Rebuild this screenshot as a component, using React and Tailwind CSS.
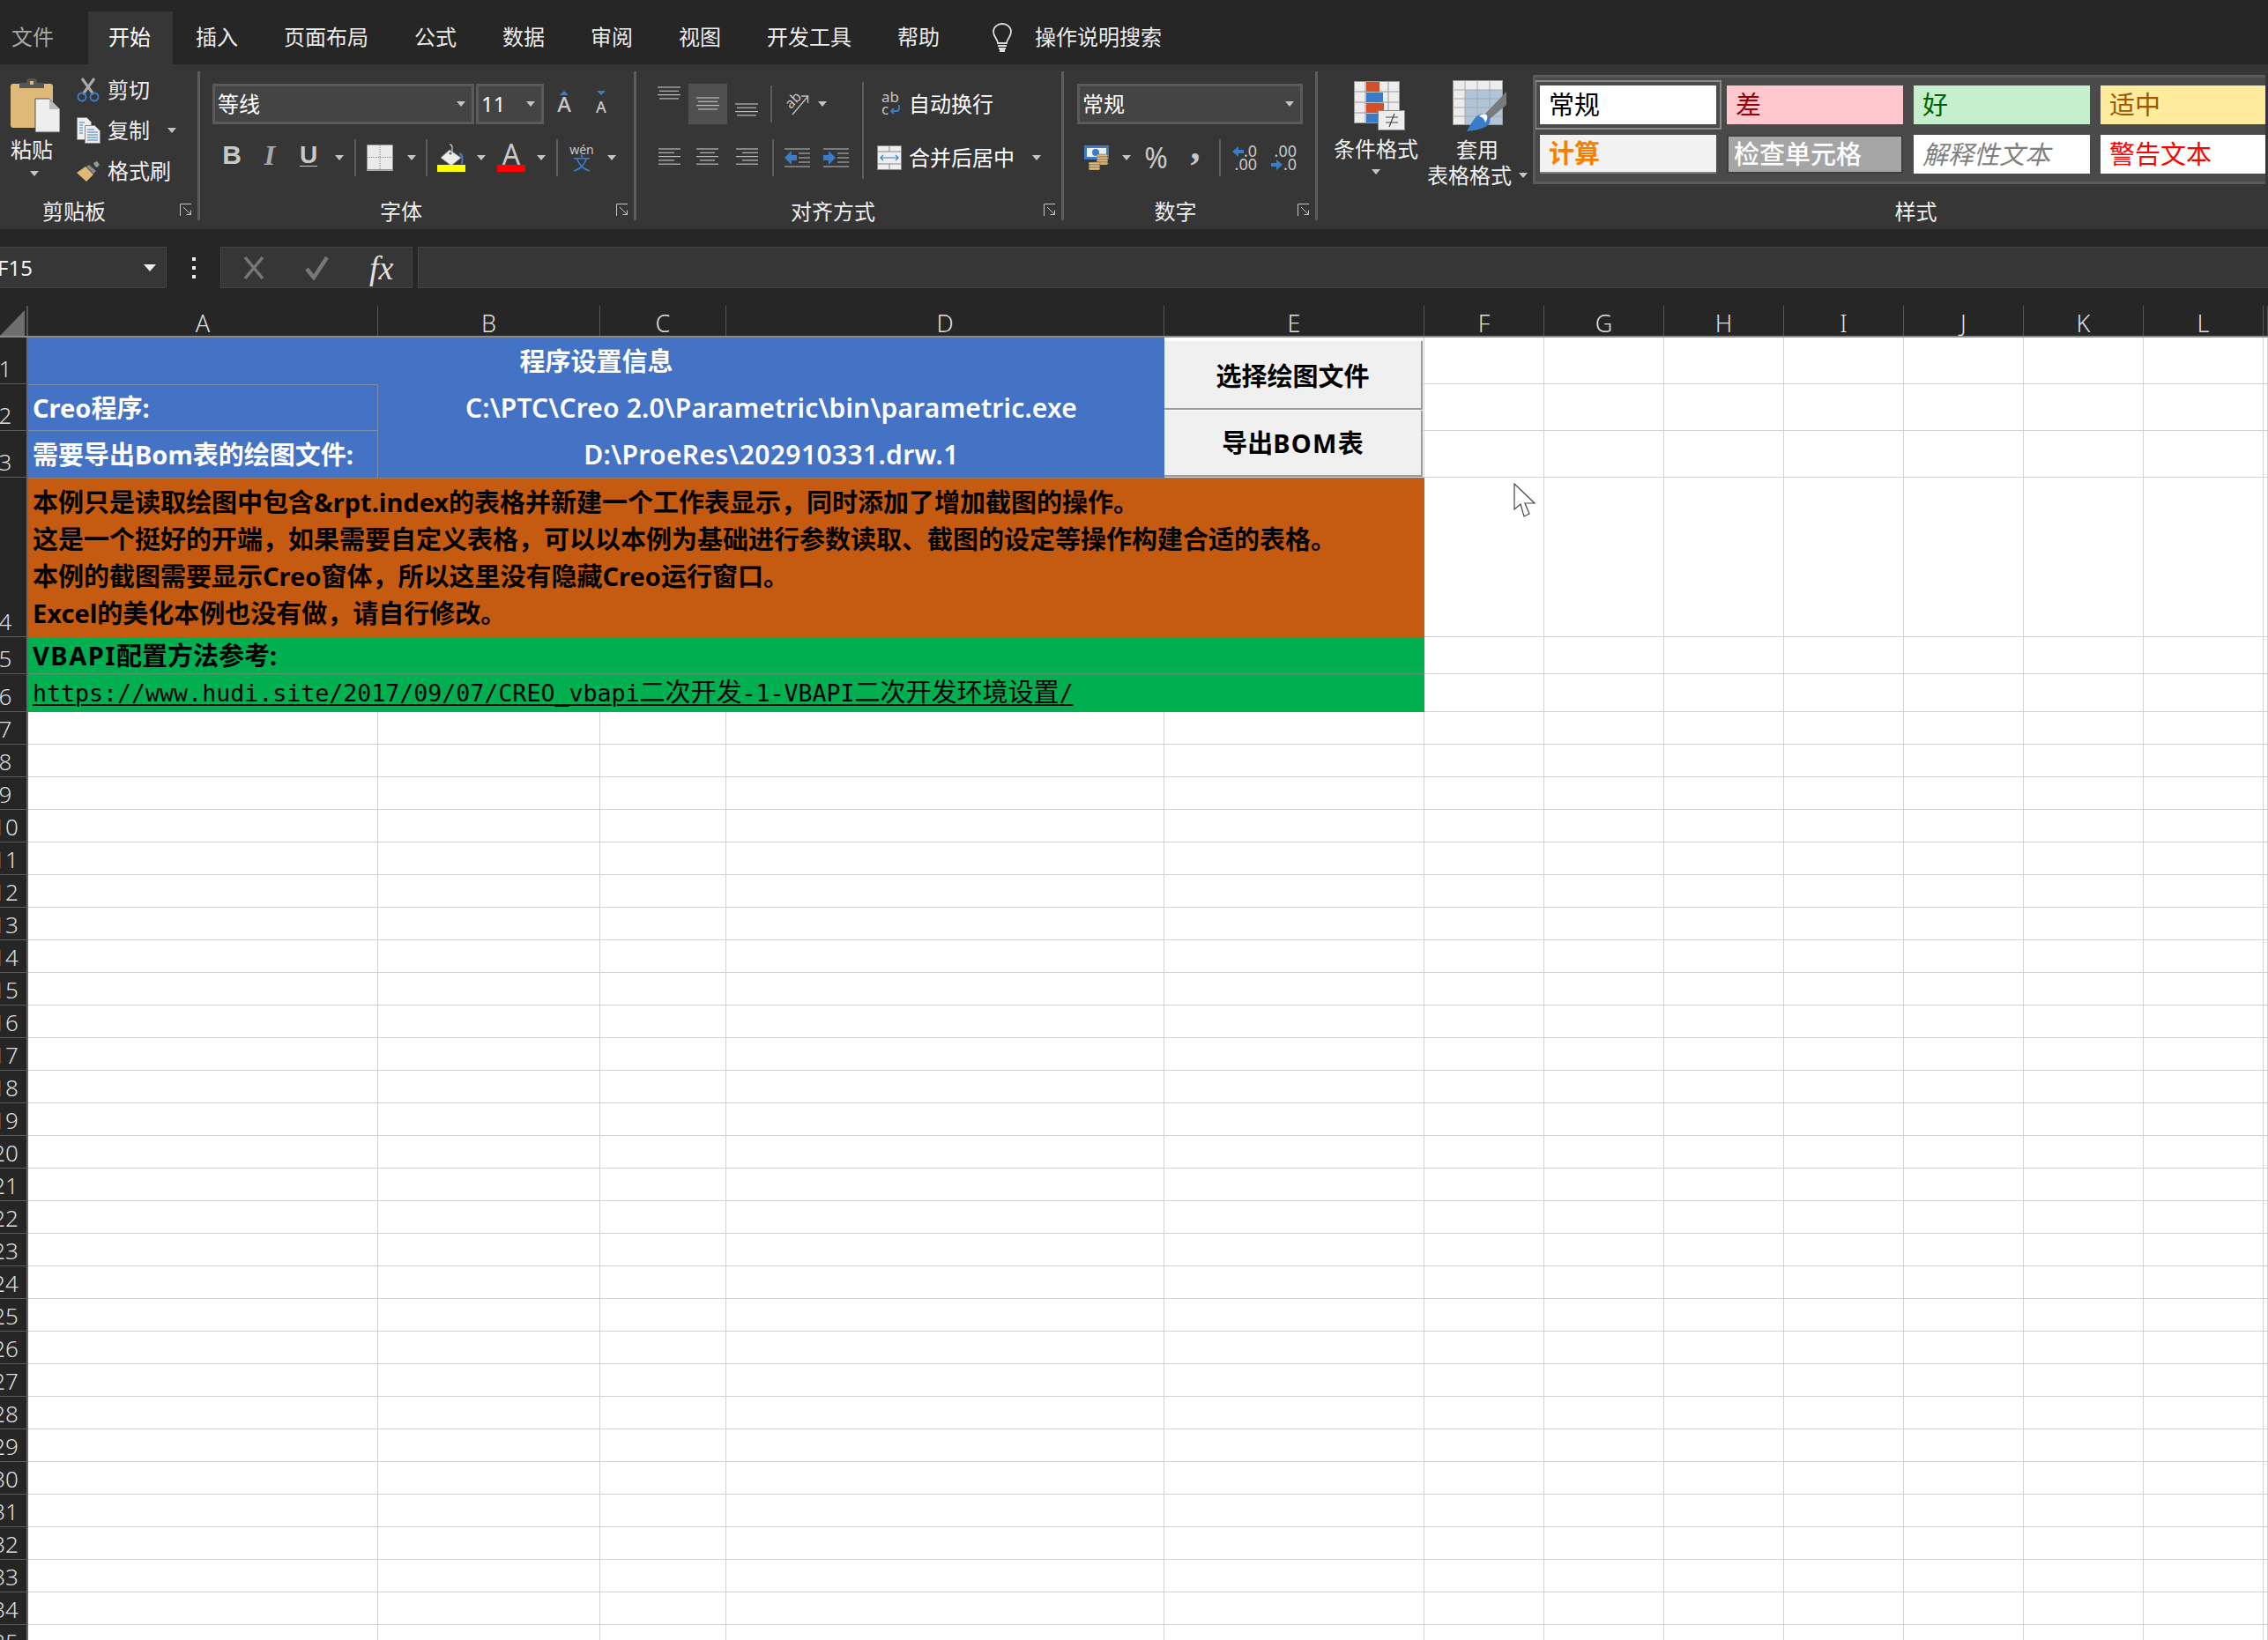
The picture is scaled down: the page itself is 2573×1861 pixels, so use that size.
import React from "react";

const Caret = ({ className = "" }) => (
  <div className={"w-0 h-0 shrink-0 border-x-[5px] border-x-transparent border-t-[6px] border-t-[#c4c4c4] " + className} />
);
const Sep = ({ className = "" }) => <div className={"w-[2px] h-[42px] shrink-0 bg-[#5c5c5c] " + className} />;

const Expander = () => (
  <svg width="14" height="14" viewBox="0 0 14 14" className="absolute right-[6px] top-[3px]" fill="none" stroke="#c4c4c4" strokeWidth="1">
    <path d="M0.5 14V0.5H13" />
    <path d="M4 4L12.5 12.5M12.5 7.5V12.5H7.5" />
  </svg>
);

const Lines = ({ rows, w = 26, gap = 4.3, h }) => (
  <svg width={w} height={h} viewBox={`0 0 ${w} ${h}`} className="shrink-0" stroke="#bdbdbd" strokeWidth="1.2">
    {rows.map((r, i) => (
      <line key={i} x1={r[0]} x2={r[1]} y1={1 + i * gap} y2={1 + i * gap} />
    ))}
  </svg>
);

const Paste = () => (
  <svg width="56" height="62" viewBox="0 0 56 62" className="shrink-0">
    <rect x="0" y="6" width="48" height="50" rx="3" fill="#dfb978" />
    <path d="M10 11V7a2 2 0 0 1 2-2h6V3a3 3 0 0 1 3-3h6a3 3 0 0 1 3 3v2h6a2 2 0 0 1 2 2v4z" fill="#555" />
    <rect x="22" y="3" width="4" height="4" fill="#dfb978" />
    <path d="M28 23h16l12 12v26H28z" fill="#eee" stroke="#555" strokeWidth="1" />
    <path d="M44 23v12h12z" fill="#bbb" />
  </svg>
);
const Scissors = () => (
  <svg width="26" height="28" viewBox="0 0 26 28" fill="none" className="shrink-0">
    <path d="M7 19L20 1M19 19L6 1" stroke="#aaa" strokeWidth="3" />
    <circle cx="6" cy="22" r="4.5" stroke="#3a7cc8" strokeWidth="2" />
    <circle cx="20" cy="22" r="4.5" stroke="#3a7cc8" strokeWidth="2" />
  </svg>
);
const Copy = () => (
  <svg width="27" height="30" viewBox="0 0 27 30" className="shrink-0">
    <path d="M0.5 0.5h11l5 5v20h-16z" fill="#eee" stroke="#888" />
    <path d="M9.5 9.5h11l6 6v14h-17z" fill="#eee" stroke="#888" />
    <path d="M3 6h6M3 9h4M3 12h4M3 15h4M3 18h4M12 14h8M12 17h12M12 20h12M12 23h12M12 26h12" stroke="#3a7cc8" strokeWidth="1.1" />
  </svg>
);
const Brush = () => (
  <svg width="26" height="24" viewBox="0 0 26 24" className="shrink-0">
    <path d="M19 3l4-2 3 4-3 3-2-1z" fill="#999" />
    <path d="M14 5l8 7-3 3-8-8z" fill="#8a8a8a" />
    <path d="M10 7l9 9-8 8L0 14z" fill="#dfb978" />
  </svg>
);
const Borders = () => (
  <svg width="30" height="30" viewBox="0 0 30 30" className="shrink-0">
    <rect x="0.5" y="0.5" width="29" height="28" fill="#ebebeb" stroke="#999" strokeDasharray="1 1" />
    <path d="M15 1V28M1 14.5H29" stroke="#888" strokeDasharray="1 1" />
    <path d="M0 29.5H30" stroke="#aaa" strokeWidth="1.2" />
  </svg>
);
const Fill = () => (
  <svg width="32" height="32" viewBox="0 0 32 32" className="shrink-0">
    <path d="M14 1a3 3 0 0 1 3 3v6" stroke="#bbb" strokeWidth="1.4" fill="none" />
    <path d="M14 7L27 16 16 25 4 16z" fill="#eee" stroke="#888" />
    <circle cx="15" cy="11" r="1.6" fill="#666" />
    <path d="M26 10c4 2 4 6 3 13h-2c1-5 1-8-2-11z" fill="#3a7cc8" />
    <rect x="0" y="24" width="32" height="8" fill="#ffff00" />
  </svg>
);
const Orient = () => (
  <svg width="28" height="28" viewBox="0 0 28 28" className="shrink-0" fill="none" stroke="#bdbdbd">
    <path d="M9 27L26 7M19 6h7.5v8" strokeWidth="1.4" />
    <text x="1" y="17" fontSize="16" fill="#c8c8c8" stroke="none" transform="rotate(-45 9 12)" fontFamily="Noto Sans">ab</text>
  </svg>
);
const Wrap = () => (
  <svg width="22" height="28" viewBox="0 0 22 28" className="shrink-0">
    <text x="0" y="12" fontSize="17" fill="#c4c4c4" fontFamily="Noto Sans">ab</text>
    <text x="0" y="26" fontSize="17" fill="#c4c4c4" fontFamily="Noto Sans">c</text>
    <path d="M20 15v4a3 3 0 0 1-3 3h-5M14 19l-3 3 3 3" fill="none" stroke="#3a7cc8" strokeWidth="1.8" />
  </svg>
);
const Merge = () => (
  <svg width="28" height="28" viewBox="0 0 28 28" className="shrink-0">
    <rect x="0.5" y="0.5" width="27" height="27" fill="#eee" stroke="#888" />
    <path d="M0 7H28M0 21H28M14 0V7M14 21V28" stroke="#888" />
    <path d="M4 14H24M7 11l-3 3 3 3M21 11l3 3-3 3" fill="none" stroke="#3a7cc8" strokeWidth="1.2" />
  </svg>
);
const Indent = ({ right }) => (
  <svg width="29" height="22" viewBox="0 0 29 22" className="shrink-0" stroke="#bdbdbd" strokeWidth="1.1">
    <path d="M0 1H29M16 6H29M16 11H29M16 16H29M0 21H29" />
    {right ? (
      <path d="M0 8h6V3l8 8-8 8v-5H0z" fill="#3a7cc8" stroke="none" />
    ) : (
      <path d="M14 8H8V3L0 11l8 8v-5h6z" fill="#3a7cc8" stroke="none" />
    )}
  </svg>
);
const Arrow = ({ right }) => (
  <svg width="14" height="14" viewBox="0 0 14 14" className="shrink-0">
    {right ? <path d="M0 5h6V1l7 6-7 6V9H0z" fill="#3a7cc8" /> : <path d="M14 5H8V1L1 7l7 6V9h6z" fill="#3a7cc8" />}
  </svg>
);
const Money = () => (
  <svg width="28" height="28" viewBox="0 0 28 28" className="shrink-0">
    <rect x="0" y="0" width="28" height="16" fill="#3a7cc8" />
    <rect x="3" y="3" width="22" height="10" fill="#eee" />
    <circle cx="13" cy="8" r="4" fill="#3a7cc8" />
    {[10, 13, 16, 19].map((y) => (
      <rect key={y} x="14" y={y} width="13" height="3" rx="1.4" fill="#dfb978" stroke="#555" strokeWidth="0.5" />
    ))}
    {[19, 22, 25].map((y) => (
      <rect key={y} x="5" y={y} width="13" height="3" rx="1.4" fill="#dfb978" stroke="#555" strokeWidth="0.5" />
    ))}
  </svg>
);
const CondFmt = () => (
  <svg width="58" height="56" viewBox="0 0 58 56" className="shrink-0">
    <rect x="0.5" y="0.5" width="51" height="47" fill="#ededed" stroke="#999" />
    <path d="M13 0V48M26 0V48M39 0V48M0 12H52M0 24H52M0 36H52" stroke="#999" />
    <rect x="14" y="1" width="15" height="11" fill="#d1502a" />
    <rect x="14" y="13" width="19" height="11" fill="#3a7cc8" />
    <rect x="14" y="25" width="20" height="11" fill="#d1502a" />
    <rect x="14" y="37" width="15" height="10" fill="#3a7cc8" />
    <rect x="27.5" y="33.5" width="30" height="22" fill="#ededed" stroke="#888" />
    <path d="M36 41H50M36 47H50M46 37L40 52" stroke="#444" strokeWidth="1.2" />
  </svg>
);
const TableFmt = () => (
  <svg width="62" height="58" viewBox="0 0 62 58" className="shrink-0">
    <rect x="0.5" y="0.5" width="56" height="50" fill="#ededed" stroke="#999" />
    <rect x="14" y="11" width="42" height="39" fill="#b0c4da" />
    <path d="M14 0V50M28 0V50M42 0V50M0 11H56M0 21H56M0 31H56M0 41H56" stroke="#aaa" />
    <path d="M61 13V28L42 44 37 38z" fill="#7a7a7a" />
    <path d="M16 58C24 44 28 36 38 39c5 2 6 8 2 12-3 3-12 6-24 7z" fill="#3a7cc8" />
    <path d="M30 41c3-3 7-3 9-1 1 2 0 6-2 8-1-4-3-6-7-7z" fill="#fff" />
  </svg>
);
const Bulb = () => (
  <svg width="24" height="34" viewBox="0 0 24 34" fill="none" stroke="#ddd" strokeWidth="1.8" className="shrink-0">
    <path d="M7 23c0-5-5-7-5-13a10 9 0 0 1 20 0c0 6-5 8-5 13z" />
    <path d="M7 26h10M8 29h8" />
    <rect x="9" y="30" width="6" height="3" fill="#ddd" stroke="none" />
  </svg>
);

const Tab = ({ children, active, cls = "" }) => (
  <div className={"h-[60px] px-[26px] flex items-center pb-[2px] " + (active ? "bg-[#363636] text-white " : "text-[#ececec] ") + cls}>{children}</div>
);

const Combo = ({ w, children }) => (
  <div className={"h-[46px] bg-[#444444] border-[3px] border-[#5a5a5a] pl-[3px] pr-[7px] flex items-center justify-between text-white " + w}>
    <span>{children}</span>
    <Caret />
  </div>
);

const Group = ({ w, label, labelCls = "", expander = true, children }) => (
  <div className={"shrink-0 h-[169px] mt-[8px] flex flex-col " + w}>
    <div className="flex-1 min-h-0">{children}</div>
    <div className={"relative h-[22px] flex items-center justify-center text-[24px] leading-[22px] text-[#efefef] " + labelCls}>
      <span className="translate-y-[1px]">{label}</span>
      {expander && <Expander />}
    </div>
  </div>
);

const StyleCell = ({ cls, children }) => (
  <div className={"w-[200px] h-[44px] flex items-center pl-[10px] pb-[2px] text-[29px] leading-none whitespace-nowrap " + cls}>{children}</div>
);

const Ribbon = () => (
  <div className="h-[187px] bg-[#363636] flex text-[24px] leading-none text-[#efefef]">
    <Group w="w-[224px]" label="剪贴板" labelCls="pr-[56px]">
      <div className="flex pl-[12px] pt-[8px]">
        <div className="w-[56px] flex flex-col">
          <Paste />
          <div className="mt-[7px] leading-[24px]">粘贴</div>
          <Caret className="ml-[22px] mt-[12px]" />
        </div>
        <div className="ml-[19px] flex flex-col -mt-[2px]">
          <div className="h-[30px] flex items-center"><Scissors /><span className="ml-[9px]">剪切</span></div>
          <div className="h-[30px] mt-[16px] flex items-center"><Copy /><span className="ml-[8px]">复制</span><Caret className="ml-[20px]" /></div>
          <div className="h-[30px] mt-[16px] flex items-center"><Brush /><span className="ml-[9px]">格式刷</span></div>
        </div>
      </div>
    </Group>
    <div className="w-[3px] h-[169px] mt-[8px] bg-[#5c5c5c] shrink-0" />
    <Group w="w-[492px]" label="字体" labelCls="pr-[36px]">
      <div className="flex items-center pl-[14px] pt-[14px]">
        <Combo w="w-[297px]">等线</Combo>
        <Combo w="w-[77px] ml-[2px]">11</Combo>
        <div className="ml-[13px] relative w-[20px] h-[46px] flex items-end justify-center pb-[11px] text-[24px] text-[#c8c8c8] font-medium font-['Noto_Sans']">
          A
          <div className="absolute top-[8px] left-[5px] w-0 h-0 border-x-[5px] border-x-transparent border-b-[5px] border-b-[#3a7cc8]" />
        </div>
        <div className="ml-[24px] relative w-[16px] h-[46px] flex items-end justify-center pb-[11px] text-[18px] text-[#c8c8c8] font-medium font-['Noto_Sans']">
          A
          <div className="absolute top-[8px] left-[3px] w-0 h-0 border-x-[5px] border-x-transparent border-t-[5px] border-t-[#3a7cc8]" />
        </div>
      </div>
      <div className="flex items-center mt-[17px] h-[42px] text-[#c8c8c8]">
        <span className="ml-[24px] w-[24px] text-center font-['Liberation_Sans'] font-bold text-[30px] -translate-y-[3px]">B</span>
        <span className="ml-[19px] w-[24px] text-center font-['Liberation_Serif'] italic font-bold text-[32px] text-[#a8a8a8] -translate-y-[3px]">I</span>
        <span className="ml-[20px] w-[24px] text-center font-['Liberation_Sans'] font-bold text-[28px] underline underline-offset-[3px] decoration-1 -translate-y-[3px]">U</span>
        <Caret className="ml-[18px]" />
        <Sep className="ml-[12px]" />
        <div className="ml-[12px]"><Borders /></div>
        <Caret className="ml-[16px]" />
        <Sep className="ml-[11px]" />
        <div className="ml-[11px]"><Fill /></div>
        <Caret className="ml-[13px]" />
        <div className="ml-[13px] w-[32px] flex flex-col items-center">
          <span className="font-['Noto_Sans'] text-[32px] leading-[24px] text-[#c8c8c8]">A</span>
          <div className="w-[32px] h-[8px] bg-[#ff0000]" />
        </div>
        <Caret className="ml-[13px]" />
        <Sep className="ml-[12px]" />
        <div className="ml-[14px] w-[26px] flex flex-col items-center">
          <span className="font-['Noto_Sans'] text-[14px] leading-[14px] text-[#c8c8c8]">wén</span>
          <span className="text-[20px] leading-[18px] text-[#3a7cc8]">文</span>
        </div>
        <Caret className="ml-[16px]" />
      </div>
    </Group>
    <div className="w-[3px] h-[169px] mt-[8px] bg-[#5c5c5c] shrink-0" />
    <Group w="w-[482px]" label="对齐方式" labelCls="pr-[36px]">
      <div className="flex">
        <div className="w-[256px] shrink-0 pt-[14px]">
          <div className="flex h-[46px]">
            <div className="ml-[24px] mt-[3px]"><Lines h={16} rows={[[0, 26], [2, 24], [0, 26], [2, 24]]} /></div>
            <div className="ml-[9px] w-[44px] h-[46px] bg-[#505050] flex items-center justify-center"><Lines h={16} rows={[[0, 26], [2, 24], [0, 26], [2, 24]]} /></div>
            <div className="ml-[9px] mt-[22px]"><Lines h={16} rows={[[0, 26], [2, 24], [0, 26], [2, 24]]} /></div>
            <Sep className="ml-[14px] mt-[2px]" />
            <div className="ml-[14px] mt-[8px]"><Orient /></div>
            <Caret className="ml-[10px] mt-[20px]" />
          </div>
          <div className="flex items-center h-[42px] mt-[17px]">
            <div className="ml-[25px]"><Lines h={22} rows={[[0, 25], [0, 18], [0, 25], [0, 18], [0, 25], [0, 18]]} /></div>
            <div className="ml-[17px]"><Lines h={22} rows={[[0, 25], [4, 21], [0, 25], [4, 21], [0, 25], [4, 21]]} /></div>
            <div className="ml-[19px]"><Lines h={22} rows={[[0, 25], [7, 25], [0, 25], [7, 25], [0, 25], [7, 25]]} /></div>
            <Sep className="ml-[15px]" />
            <div className="ml-[12px]"><Indent /></div>
            <div className="ml-[15px]"><Indent right /></div>
          </div>
        </div>
        <div className="w-[2px] h-[110px] mt-[12px] bg-[#5c5c5c] shrink-0" />
        <div className="pt-[14px]">
          <div className="flex items-center h-[46px] pl-[20px] text-white">
            <Wrap /><span className="ml-[9px]">自动换行</span>
          </div>
          <div className="flex items-center h-[42px] mt-[17px] pl-[15px] text-white">
            <Merge /><span className="ml-[8px]">合并后居中</span><Caret className="ml-[20px]" />
          </div>
        </div>
      </div>
    </Group>
    <div className="w-[3px] h-[169px] mt-[8px] bg-[#5c5c5c] shrink-0" />
    <Group w="w-[285px]" label="数字" labelCls="pr-[32px]">
      <div className="pl-[15px] pt-[14px]"><Combo w="w-[256px]">常规</Combo></div>
      <div className="flex items-center h-[42px] mt-[17px] text-[#c8c8c8] font-['Noto_Sans']">
        <div className="ml-[23px]"><Money /></div>
        <Caret className="ml-[15px]" />
        <span className="ml-[15px] w-[27px] text-center text-[32px] leading-none">%</span>
        <span className="ml-[20px] w-[22px] text-center font-['Liberation_Serif'] font-bold text-[44px] leading-none -translate-y-[12px]">,</span>
        <Sep className="ml-[16px]" />
        <div className="ml-[13px] w-[28px] text-[18px] leading-[15px]">
          <div className="flex items-center justify-end"><Arrow />.0</div>
          <div className="text-right">.00</div>
        </div>
        <div className="ml-[17px] w-[28px] text-[18px] leading-[15px]">
          <div className="text-right">.00</div>
          <div className="flex items-center justify-end"><Arrow right />.0</div>
        </div>
      </div>
    </Group>
    <div className="w-[3px] h-[169px] mt-[8px] bg-[#5c5c5c] shrink-0" />
    <Group w="w-[1075px]" label="样式" labelCls="pl-[282px]" expander={false}>
      <div className="flex">
        <div className="ml-[18px] w-[96px] pt-[11px] flex flex-col items-center text-[24px] leading-[24px]">
          <div className="ml-[8px]"><CondFmt /></div>
          <div className="mt-[9px]">条件格式</div>
          <Caret className="mt-[11px]" />
        </div>
        <div className="ml-[8px] w-[110px] pt-[10px] text-[24px] leading-[24px] whitespace-nowrap">
          <div className="ml-[31px]"><TableFmt /></div>
          <div className="ml-[35px] mt-[9px]">套用</div>
          <div className="ml-[2px] mt-[5px] flex items-center">表格格式<Caret className="ml-[8px]" /></div>
        </div>
        <div className="ml-[12px] mt-[4px] flex-1 h-[124px] bg-[#4a4a4a] border-y-[3px] border-l-[3px] border-[#5a5a5a] pl-[5px] pt-[9px] overflow-hidden">
          <div className="grid grid-cols-[200px_200px_200px_200px] gap-x-[12px] gap-y-[12px]">
            <StyleCell cls="bg-white text-black outline-2 outline-offset-[4px] outline-[#8a8a8a]">常规</StyleCell>
            <StyleCell cls="bg-[#ffc7ce] text-[#9c0006]">差</StyleCell>
            <StyleCell cls="bg-[#c6efce] text-[#006100]">好</StyleCell>
            <StyleCell cls="bg-[#ffeb9c] text-[#9c5700]">适中</StyleCell>
            <StyleCell cls="bg-[#f2f2f2] text-[#fa7d00] border-b-2 border-[#7f7f7f] font-bold">计算</StyleCell>
            <StyleCell cls="bg-[#a5a5a5] text-white border-2 border-[#3f3f3f] font-medium !pl-[6px]">检查单元格</StyleCell>
            <StyleCell cls="bg-white text-[#7f7f7f] italic">解释性文本</StyleCell>
            <StyleCell cls="bg-white text-[#ff0000]">警告文本</StyleCell>
          </div>
        </div>
      </div>
    </Group>
  </div>
);

const colTpl = "grid grid-cols-[397px_252px_143px_497px_295px_136px_136px_136px_136px_136px_136px_136px_5px]";
const letters = ["A", "B", "C", "D", "E", "F", "G", "H", "I", "J", "K", "L", ""];

const RowHead = ({ n, h }) => (
  <div className={"w-[32px] shrink-0 relative overflow-hidden bg-[#262626] border-r-2 border-[#6a6a6a] border-b border-b-[#5a5a5a] flex items-end " + h}>
    <div className="w-[12px] flex justify-center">
      <span className="text-[26px] leading-[33px] text-[#dedede] font-light whitespace-nowrap">{n}</span>
    </div>
  </div>
);

const Blank = ({ cols }) => (
  <>
    {cols.map((c) => (
      <div key={c} className="border-r border-b border-[#d2d2d2]" />
    ))}
  </>
);

const Row = ({ n, h, children }) => (
  <div className={"flex " + h}>
    <RowHead n={n} h={h} />
    <div className={"flex-1 " + colTpl}>{children}</div>
  </div>
);

const fColumns = [5, 6, 7, 8, 9, 10, 11, 12];
const allColumns = [0, 1, 2, 3, 4, 5, 6, 7, 8, 9, 10, 11, 12];
const plainRows = Array.from({ length: 29 }, (_, i) => i + 7);

const Sheet = () => (
  <div className="relative bg-white">
    <Row n="1" h="h-[53px]">
      <div className="col-span-4 bg-[#4472c4] flex items-center justify-center text-white font-bold text-[29px] leading-none">程序设置信息</div>
      <Blank cols={[4, ...fColumns]} />
    </Row>
    <Row n="2" h="h-[53px]">
      <div className="bg-[#4472c4] border-t border-r border-b border-[#7b8fa8] flex items-center pl-[5px] text-white font-bold text-[29px] leading-none">Creo程序:</div>
      <div className="col-span-3 bg-[#4472c4] flex items-center justify-center text-white font-semibold text-[30px] tracking-[0.15px] leading-none">C:\PTC\Creo 2.0\Parametric\bin\parametric.exe</div>
      <Blank cols={[4, ...fColumns]} />
    </Row>
    <Row n="3" h="h-[53px]">
      <div className="bg-[#4472c4] border-r border-[#7b8fa8] flex items-center pl-[5px] text-white font-bold text-[29px] leading-none whitespace-nowrap">需要导出Bom表的绘图文件:</div>
      <div className="col-span-3 bg-[#4472c4] flex items-center justify-center text-white font-semibold text-[30px] tracking-[0.35px] leading-none">D:\ProeRes\202910331.drw.1</div>
      <Blank cols={[4, ...fColumns]} />
    </Row>
    <Row n="4" h="h-[181px]">
      <div className="col-span-5 bg-[#c55a11] border-t border-[#8f7a6a] pl-[5px] pt-[6px] text-black font-bold text-[29px] leading-[42px] whitespace-nowrap">
        <div>本例只是读取绘图中包含&amp;rpt.index的表格并新建一个工作表显示，同时添加了增加截图的操作。</div>
        <div>这是一个挺好的开端，如果需要自定义表格，可以以本例为基础进行参数读取、截图的设定等操作构建合适的表格。</div>
        <div>本例的截图需要显示Creo窗体，所以这里没有隐藏Creo运行窗口。</div>
        <div>Excel的美化本例也没有做，请自行修改。</div>
      </div>
      <Blank cols={fColumns} />
    </Row>
    <Row n="5" h="h-[42px]">
      <div className="col-span-5 bg-[#00b050] border-b border-[#5b9a70] flex items-center pl-[5px] text-black font-bold text-[29px] leading-none"><span className="tracking-[1.5px]">VBAPI</span>配置方法参考:</div>
      <Blank cols={fColumns} />
    </Row>
    <Row n="6" h="h-[43px]">
      <div className="col-span-5 bg-[#00b050] flex items-center pl-[5px] text-black text-[29px] leading-none whitespace-nowrap">
        <span className="underline decoration-2 underline-offset-[3px] font-['DejaVu_Sans_Mono','Noto_Sans_CJK_SC',monospace]">
          <span className="text-[26.6px]">https://www.hudi.site/2017/09/07/CREO_vbapi</span>二次开发<span className="text-[26.6px]">-1-VBAPI</span>二次开发环境设置<span className="text-[26.6px]">/</span>
        </span>
      </div>
      <Blank cols={fColumns} />
    </Row>
    {plainRows.map((n) => (
      <Row key={n} n={String(n)} h="h-[37px]">
        <Blank cols={allColumns} />
      </Row>
    ))}
    <div className="absolute left-[1321px] top-[4px] w-[293px] h-[78px] bg-[#f0f0f0] border-r-2 border-b-2 border-[#9a9a9a] flex items-center justify-center text-black font-bold text-[29px] leading-none pt-[2px]">选择绘图文件</div>
    <div className="absolute left-[1321px] top-[83px] w-[293px] h-[75px] bg-[#f0f0f0] border-r-2 border-b-2 border-[#9a9a9a] flex items-center justify-center text-black font-bold text-[29px] leading-none"><span>导出</span><span className="tracking-[1.3px]">BOM</span><span>表</span></div>
    <svg width="26" height="40" viewBox="0 0 26 40" className="absolute left-[1717px] top-[165px]">
      <path d="M1 1V30L8 24 12 38 18 35 13 23H24z" fill="#fff" stroke="#444" strokeWidth="1.2" />
    </svg>
  </div>
);

export default function App() {
  return (
    <div className="w-[2573px] h-[1861px] overflow-hidden bg-[#262626] font-['Noto_Sans','Noto_Sans_CJK_SC',sans-serif]">
      <div className="h-[73px] flex items-end text-[24px] leading-none">
        <div className="h-[60px] pl-[13px] w-[100px] flex items-center pb-[2px] text-[#a8a8a8]">文件</div>
        <Tab active cls="!px-[23px] w-[96px]">开始</Tab>
        <Tab>插入</Tab>
        <Tab>页面布局</Tab>
        <Tab>公式</Tab>
        <Tab>数据</Tab>
        <Tab>审阅</Tab>
        <Tab>视图</Tab>
        <Tab>开发工具</Tab>
        <Tab>帮助</Tab>
        <div className="ml-[33px] mr-[25px] h-[60px] flex items-center"><Bulb /></div>
        <div className="h-[60px] flex items-center pb-[2px] text-[#ececec]">操作说明搜索</div>
      </div>
      <Ribbon />
      <div className="h-[47px] mt-[20px] flex text-[24px]">
        <div className="w-[189px] h-full bg-[#363636] border-r border-y border-[#444] overflow-hidden flex items-center justify-between pr-[11px] text-[#f0f0f0]">
          <span className="font-['Noto_Sans'] -ml-[3px] text-[24px]">F15</span>
          <div className="w-0 h-0 border-x-[7px] border-x-transparent border-t-[8px] border-t-[#eee]" />
        </div>
        <div className="w-[61px] flex flex-col items-center justify-center gap-[6px]">
          <div className="w-[4px] h-[4px] bg-[#eee]" />
          <div className="w-[4px] h-[4px] bg-[#eee]" />
          <div className="w-[4px] h-[4px] bg-[#eee]" />
        </div>
        <div className="w-[218px] h-full bg-[#363636] border border-[#444] flex items-center">
          <svg width="24" height="28" viewBox="0 0 24 28" className="ml-[25px]" fill="none" stroke="#777" strokeWidth="3.5"><path d="M2 2L22 26M22 2L2 26" /></svg>
          <svg width="28" height="28" viewBox="0 0 28 28" className="ml-[46px]" fill="none" stroke="#777" strokeWidth="4.5"><path d="M2 15L10 25 25 2" /></svg>
          <span className="ml-[45px] text-[#e0e0e0] font-['Liberation_Serif'] italic text-[38px] leading-none">fx</span>
        </div>
        <div className="ml-[6px] flex-1 h-full bg-[#363636] border-y border-l border-[#444]" />
      </div>
      <div className="h-[36px] mt-[20px] flex border-b-2 border-[#8a8a8a]">
        <div className="w-[32px] shrink-0 border-r-2 border-[#555] relative">
          <svg width="28" height="30" viewBox="0 0 28 30" className="absolute left-0 top-[5px]"><path d="M28 0V29H0z" fill="#6e6e6e" /></svg>
        </div>
        <div className={"flex-1 " + colTpl}>
          {letters.map((l, i) => (
            <div key={i} className="border-r border-[#555] flex items-end justify-center text-[27px] leading-[28px] text-[#dedede] font-light">{l}</div>
          ))}
        </div>
      </div>
      <Sheet />
    </div>
  );
}
